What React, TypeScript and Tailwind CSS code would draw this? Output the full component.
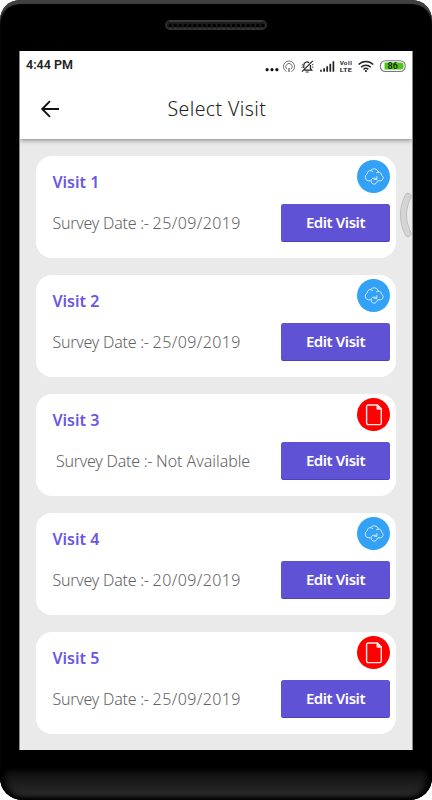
type Visit = {
  id: number;
  date: string;
  synced: boolean;
};

const visits: Visit[] = [
  { id: 1, date: "25/09/2019", synced: true },
  { id: 2, date: "25/09/2019", synced: true },
  { id: 3, date: "Not Available", synced: false },
  { id: 4, date: "20/09/2019", synced: true },
  { id: 5, date: "25/09/2019", synced: false },
];

function Speaker() {
  return (
    <svg className="mx-auto block" width="102" height="10" viewBox="0 0 102 10" fill="none">
      <rect x="0.75" y="0.75" width="100.5" height="8.5" rx="4.25" fill="#1c1c1c" stroke="#303030" strokeWidth="1.5" />
      <path d="M4 1h94" stroke="#484848" />
      <path d="M5.5 5.5h94" stroke="#000" strokeWidth="3.6" strokeLinecap="round" strokeDasharray="0 4.85" />
      <path d="M4 8.2h94" stroke="#4a4a4a" strokeWidth="0.8" strokeDasharray="3 1.85" />
    </svg>
  );
}

function StatusIcons() {
  return (
    <svg width="144" height="20" viewBox="264 54 144 20" fill="none" stroke="#222">
      <g fill="#111" stroke="none">
        <circle cx="267.1" cy="67.7" r="1.6" />
        <circle cx="272" cy="67.7" r="1.6" />
        <circle cx="276.9" cy="67.7" r="1.6" />
      </g>
      {/* hotspot */}
      <g stroke="#777" strokeWidth="1">
        <path d="M286.6 69.6a5.6 5.6 0 1 1 4.8 0" />
        <path d="M287 67.2a3.2 3.2 0 1 1 4 0" />
        <path d="M289 66v4" strokeWidth="1.5" />
      </g>
      {/* muted bell */}
      <g strokeWidth="1.2">
        <path d="M303.8 66.2v-3a3.2 3.2 0 0 1 5.4-2.3M310.4 63v3.4l1.4 1.8h-7.6M305.8 70h2.8M312.8 58.8l-10.8 10.8" />
        <path d="M301.8 62.2l1.2 1M301.6 65.4l1.2-.5M311.8 63l1.5-.6M311.8 65l1.6.3" strokeWidth="0.9" />
      </g>
      {/* signal */}
      <path d="M321 69.8v-2M324.1 69.8v-3.6M327.2 69.8v-5.6M330.3 69.8v-8M333.4 69.8v-10.6" strokeWidth="1.7" />
      <g fill="#111" stroke="none" className="font-['Roboto'] font-semibold">
        <text x="339.8" y="63.2" fontSize="5.8" textLength="7.6" lengthAdjust="spacingAndGlyphs">Vo</text>
        <text x="339.8" y="70" fontSize="5.8" textLength="12.2" lengthAdjust="spacingAndGlyphs">LTE</text>
      </g>
      <path d="M348.9 59v4M351.1 59v4" strokeWidth="0.9" />
      {/* wifi */}
      <path d="M358.6 62.6a10 10 0 0 1 14.6 0M361.1 65.2a6.6 6.6 0 0 1 9.6 0M363.5 67.5a3.4 3.4 0 0 1 4.8 0" strokeWidth="1.5" />
      <circle cx="365.9" cy="69.1" r="1.1" fill="#222" stroke="none" />
      {/* battery */}
      <rect x="380.4" y="58.7" width="24.8" height="10.8" rx="5" stroke="#777" strokeWidth="1.1" />
      <path d="M384.5 60.4H401q2.6 0 2.6 3.6t-2.6 3.6h-16.5z" fill="#53c41b" stroke="none" />
      <text x="387.5" y="67.3" fontSize="9" textLength="10.5" fill="#172b0d" stroke="none" className="font-['Roboto'] font-semibold">86</text>
    </svg>
  );
}

function CloudSyncIcon() {
  return (
    <svg width="20" height="18" viewBox="0 0 20 18" fill="none" stroke="#d5ecff" strokeWidth="1" strokeLinecap="round" strokeLinejoin="round">
      <path d="M6.4 12.8H4.2A3.7 3.7 0 0 1 3.2 5.9C3.2 3.6 4.8 2.5 6.6 2.6 8.4-.3 13.6 .4 14.4 4.2 16.5 4.2 17.5 5.3 17.4 7.1 20.4 8.7 19.2 12.8 16.2 12.8h-2" />
      <path d="M6.6 2.6q1.3.1 2.1 1M14.4 4.2q-1.3-.1-2 .6" />
      <path d="M12.4 10.9A3.1 3.1 0 1 0 13.3 13.2M12.9 8.6v2.7h-2.6" />
    </svg>
  );
}

function FileIcon() {
  return (
    <svg width="18" height="22" viewBox="0 0 18 22" fill="none" stroke="#ffe8e8" strokeWidth="1.4" strokeLinejoin="round">
      <path d="M3.1 1h9.3L16.3 5v14.1a1.5 1.5 0 0 1-1.5 1.5H3.1a1.5 1.5 0 0 1-1.5-1.5V2.5A1.5 1.5 0 0 1 3.1 1z" />
      <path d="M12.2 1v4.1h4.1z" fill="#ffe8e8" />
    </svg>
  );
}

function VisitCard({ visit }: { visit: Visit }) {
  const available = visit.date !== "Not Available";

  return (
    <div className="relative h-[102.5px] shrink-0 rounded-[16px] bg-white pl-[16.5px] pr-[5.5px]">
      <h2 className="pt-[15px] text-[16px] leading-[22px] font-semibold text-[#6957e5] whitespace-nowrap">
        Visit {visit.id}
      </h2>
      <div className="mt-[11.5px] flex h-[38px] items-center justify-between">
        <p
          className={`text-[16px] leading-[22px] font-light tracking-[-0.25px] whitespace-nowrap text-[#626262] ${
            available ? "" : "pl-[3.5px]"
          }`}
        >
          Survey Date :- <span className={available ? "tracking-[0.4px]" : "tracking-[-0.05px]"}>{visit.date}</span>
        </p>
        <button className="h-[38px] w-[109px] shrink-0 rounded-[2.5px] border-b border-[#4d3ec3] bg-[#6052d5] text-[15px] font-semibold tracking-[-0.42px] whitespace-nowrap text-white">
          Edit Visit
        </button>
      </div>
      <div
        className={`absolute top-[4.5px] right-[5.25px] flex h-[33px] w-[33px] items-center justify-center rounded-full ${
          visit.synced ? "bg-[#33a1f5]" : "bg-[#fe0000]"
        }`}
      >
        {visit.synced ? <CloudSyncIcon /> : <FileIcon />}
      </div>
    </div>
  );
}

export default function App() {
  return (
    <div className="h-[800px] w-[432px] bg-white font-['Noto_Sans',sans-serif]">
      <div className="relative flex h-[800px] flex-col overflow-hidden rounded-t-[20px] rounded-b-[22px] bg-black shadow-[inset_0_4px_1px_#414141]">
        <div className="h-[51px] shrink-0 pt-[20px]">
          <Speaker />
        </div>

        <div className="relative ml-[19px] flex h-[699px] w-[394px] shrink-0 flex-col overflow-hidden border-x border-[#8a8a8a] bg-[#eaeaea]">
          <header className="z-10 h-[88px] shrink-0 bg-white shadow-[0_1px_5px_rgba(0,0,0,0.48)]">
            <div className="flex h-[29px] items-center justify-between pl-[6px]">
              <span className="font-['Roboto',sans-serif] text-[12.5px] font-semibold whitespace-nowrap text-[#222]">4:44 PM</span>
              <div className="mr-[4px]">
                <StatusIcons />
              </div>
            </div>
            <div className="flex h-[57px] items-center">
              <svg className="ml-[20px] shrink-0" width="20" height="18" viewBox="0 0 20 18" fill="none" stroke="#111" strokeWidth="1.9">
                <path d="M19 9H2.5M10 1.2 2.2 9l7.8 7.8" />
              </svg>
              <h1 className="ml-[107.5px] text-[19.5px] font-light tracking-[0.4px] whitespace-nowrap text-[#222]">Select Visit</h1>
            </div>
          </header>

          <main className="flex flex-col gap-[16.5px] pt-[16.5px] pr-[16.5px] pl-[16px]">
            {visits.map((visit) => (
              <VisitCard key={visit.id} visit={visit} />
            ))}
          </main>

          {/* edge swipe handle */}
          <svg className="absolute top-[141px] right-[0px]" width="13" height="46" viewBox="0 0 13 46" fill="none" strokeLinecap="round">
            <path d="M9 4.5Q0 22.5 9 41.5" stroke="#bababa" strokeWidth="7" />
            <path d="M9 4.5Q0 22.5 9 41.5" stroke="#d4d4d4" strokeWidth="5.4" />
          </svg>
        </div>

        <div className="mt-[18px] h-[32px] shrink-0 rounded-b-[22px] bg-linear-to-b from-[#0c0c0c] to-[#303030] shadow-[inset_0_-2px_4px_#000,inset_5px_0_6px_#000,inset_-5px_0_6px_#000]" />
      </div>
    </div>
  );
}
